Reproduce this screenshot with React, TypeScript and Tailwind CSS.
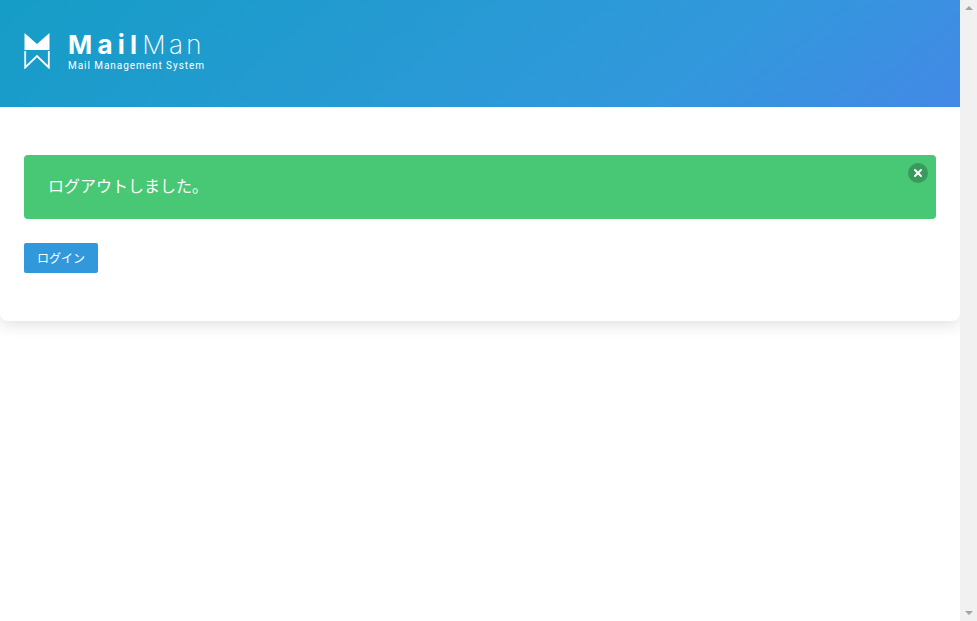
import { X } from "lucide-react";

function Logo() {
  return (
    <svg width="26" height="36" viewBox="0 0 26 36" className="shrink-0" aria-hidden="true">
      <path d="M0.5 0 L13 11 L25.5 0 V17 H0.5 Z" fill="#ffffff" />
      <path
        d="M1.2 18 V34.5 L13 23 L24.8 34.5 V18"
        fill="none"
        stroke="#ffffff"
        strokeWidth="1.8"
      />
    </svg>
  );
}

function ScrollBar() {
  return (
    <div className="flex h-[621px] w-[17px] shrink-0 flex-col items-center justify-between bg-[#f1f1f1] py-[6px]">
      <div className="h-0 w-0 border-x-[4px] border-b-[4px] border-x-transparent border-b-[#a3a3a3]" />
      <div className="h-0 w-0 border-x-[4px] border-t-[4px] border-x-transparent border-t-[#a3a3a3]" />
    </div>
  );
}

export default function App() {
  return (
    <div className="flex h-[621px] w-full overflow-hidden bg-white font-['Roboto','Noto_Sans_CJK_JP',sans-serif]">
      <main className="min-w-0 flex-1">
        <section className="overflow-hidden rounded-b-lg bg-white shadow-[0_4px_16px_rgba(0,0,0,0.12)]">
          <header className="flex h-[107px] items-center gap-[18px] bg-[linear-gradient(141deg,#159dc6_0%,#3298dc_71%,#4389e6_100%)] px-6 pb-[5px]">
            <Logo />
            <div className="text-white">
              <p className="text-[26px] leading-[28px] font-['Inter',sans-serif]">
                <span className="font-bold tracking-[0.2em]">Mail</span>
                <span className="font-extralight tracking-[0.13em]">Man</span>
              </p>
              <p className="mt-[1px] text-[10px] leading-[12px] tracking-[0.095em]">
                Mail Management System
              </p>
            </div>
          </header>

          <div className="px-6 pt-12 pb-12">
            <div className="relative flex h-16 items-center rounded bg-[#48c774] px-6 text-white">
              <p className="text-base">ログアウトしました。</p>
              <button
                type="button"
                className="absolute top-2 right-2 flex h-5 w-5 items-center justify-center rounded-full bg-[#3a9a5d] text-white"
              >
                <X size={12} strokeWidth={4} />
              </button>
            </div>

            <button
              type="button"
              className="mt-6 block h-[30px] w-[74px] rounded-[2px] bg-[#3298dc] pt-[1px] text-xs text-white"
            >
              ログイン
            </button>
          </div>
        </section>
      </main>
      <ScrollBar />
    </div>
  );
}
